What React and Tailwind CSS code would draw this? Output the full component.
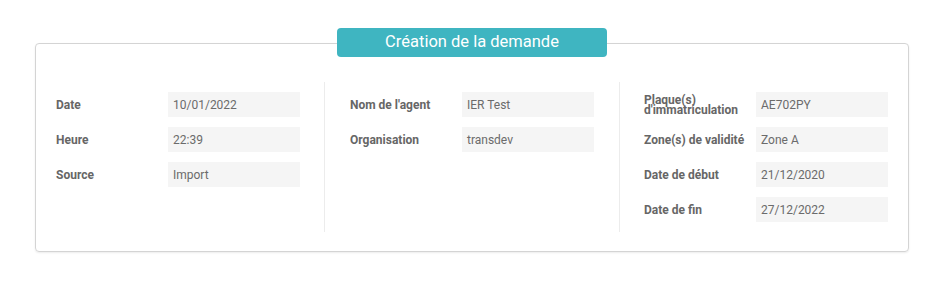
const columns = [
  {
    cls: "w-[288px] pl-[20px]",
    rows: [
      ["Date", "10/01/2022"],
      ["Heure", "22:39"],
      ["Source", "Import"],
    ],
  },
  {
    cls: "w-[295px] pl-[25px] border-l border-[#ececec]",
    rows: [
      ["Nom de l'agent", "IER Test"],
      ["Organisation", "transdev"],
    ],
  },
  {
    cls: "flex-1 pl-[24px] border-l border-[#ececec]",
    rows: [
      ["Plaque(s) d'immatriculation", "AE702PY"],
      ["Zone(s) de validité", "Zone A"],
      ["Date de début", "21/12/2020"],
      ["Date de fin", "27/12/2022"],
    ],
  },
];

export default function App() {
  return (
    <div className="min-h-screen w-full bg-white font-['Roboto',sans-serif] text-[#666]">
      <div className="pt-[28px] px-[35px] pr-[36px]">
        <div className="relative pt-[15px]">
          <div className="absolute top-0 left-1/2 -translate-x-1/2 w-[270px] h-[29px] rounded-[4px] bg-[#3fb5c1] text-white text-[16.5px] flex items-center justify-center z-10">
            Création de la demande
          </div>
          <div className="h-[209px] rounded-[4px] border border-[#d4d4d4] shadow-[0_1px_2px_rgba(0,0,0,0.08)] pt-[38px]">
            <div className="flex h-[150px]">
              {columns.map((col, i) => (
                <div key={i} className={`${col.cls} pt-[10px] flex flex-col gap-[10px]`}>
                  {col.rows.map(([label, value]) => (
                    <div key={label} className="flex items-center h-[25px]">
                      <div className="w-[112px] text-[12px] font-bold leading-[10px] text-[#666]">
                        {label}
                      </div>
                      <div className="w-[132px] h-[25px] bg-[#f5f5f5] pl-[5px] flex items-center text-[12px] text-[#6b6b6b]">
                        {value}
                      </div>
                    </div>
                  ))}
                </div>
              ))}
            </div>
          </div>
        </div>
      </div>
    </div>
  );
}
